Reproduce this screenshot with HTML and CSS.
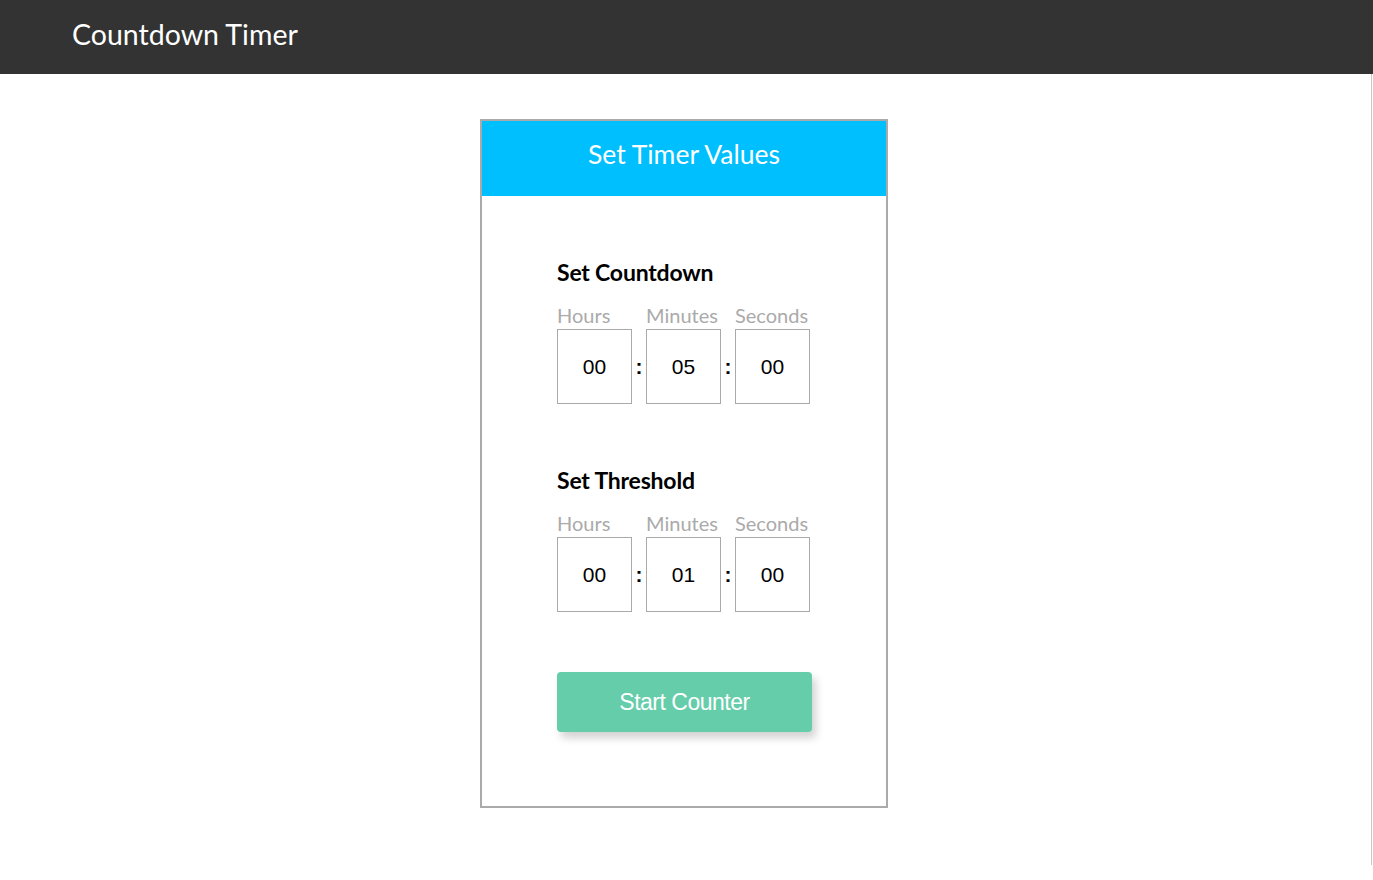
FILE: index.html
```html
<!DOCTYPE html>
<html>
<head>
<meta charset="utf-8">
<title>Countdown Timer</title>
<link rel="stylesheet" href="styles.css">
</head>
<body>
<header class="topbar">
  <h1 class="brand">Countdown Timer</h1>
</header>
<main class="page">
  <section class="card">
    <div class="card-head">Set Timer Values</div>
    <div class="card-body">
      <div class="group">
        <h2 class="group-title">Set Countdown</h2>
        <div class="labels">
          <span class="lbl">Hours</span>
          <span class="lbl">Minutes</span>
          <span class="lbl">Seconds</span>
        </div>
        <div class="fields">
          <div class="box">00</div>
          <span class="colon">:</span>
          <div class="box">05</div>
          <span class="colon">:</span>
          <div class="box">00</div>
        </div>
      </div>
      <div class="group group-second">
        <h2 class="group-title">Set Threshold</h2>
        <div class="labels">
          <span class="lbl">Hours</span>
          <span class="lbl">Minutes</span>
          <span class="lbl">Seconds</span>
        </div>
        <div class="fields">
          <div class="box">00</div>
          <span class="colon">:</span>
          <div class="box">01</div>
          <span class="colon">:</span>
          <div class="box">00</div>
        </div>
      </div>
      <button class="start">Start Counter</button>
    </div>
  </section>
</main>
</body>
</html>
```
FILE: styles.css
```css
html, body {
  margin: 0;
  padding: 0;
  background: #fff;
}
body {
  font-family: "Lato", "Open Sans", sans-serif;
  width: 1373px;
}
.topbar {
  height: 74px;
  background: #333333;
  display: flex;
  align-items: center;
  padding-left: 72px;
  padding-bottom: 6px;
  box-sizing: border-box;
}
.brand {
  margin: 0;
  font-family: "Lato", sans-serif;
  font-weight: 400;
  font-size: 28.5px;
  color: #fff;
  line-height: 1;
}
.page {
  width: 1372px;
  height: 791px;
  border-right: 1px solid #c8c8c8;
  box-sizing: border-box;
  padding-top: 45px;
  display: flex;
  justify-content: center;
  align-items: flex-start;
}
.card {
  width: 408px;
  height: 689px;
  box-sizing: border-box;
  border: 2px solid #aaaaaa;
  margin-left: -3px;
}
.card-head {
  height: 75px;
  background: #00bfff;
  color: #fff;
  font-size: 26.5px;
  display: flex;
  align-items: center;
  justify-content: center;
  padding-bottom: 10px;
  box-sizing: border-box;
}
.card-body {
  padding: 62px 0 0 75px;
}
.group-title {
  margin: 0;
  font-size: 23px;
  font-weight: 700;
  color: #000;
  line-height: 28px;
  letter-spacing: -0.2px;
}
.labels {
  display: flex;
  gap: 14px;
  margin-top: 17px;
  height: 24px;
  align-items: flex-end;
}
.lbl {
  width: 75px;
  font-size: 20px;
  color: #aaaaaa;
  line-height: 24px;
  white-space: nowrap;
}
.fields {
  display: flex;
  align-items: center;
  margin-top: 2px;
}
.box {
  width: 75px;
  height: 75px;
  box-sizing: border-box;
  border: 1px solid #aaaaaa;
  display: flex;
  align-items: center;
  justify-content: center;
  font-family: "Liberation Sans", Arial, sans-serif;
  font-size: 21px;
  color: #000;
}
.colon {
  width: 14px;
  text-align: center;
  font-family: "Liberation Sans", Arial, sans-serif;
  font-size: 21px;
  font-weight: 700;
  color: #000;
}
.group-second {
  margin-top: 62px;
}
.start {
  margin-top: 60px;
  width: 255px;
  height: 60px;
  border: none;
  border-radius: 4px;
  background: #66cdaa;
  color: #fff;
  font-family: "Liberation Sans", Arial, sans-serif;
  font-size: 23px;
  box-shadow: 4px 6px 8px rgba(0, 0, 0, 0.18);
  padding: 0;
  letter-spacing: -0.5px;
}
```
